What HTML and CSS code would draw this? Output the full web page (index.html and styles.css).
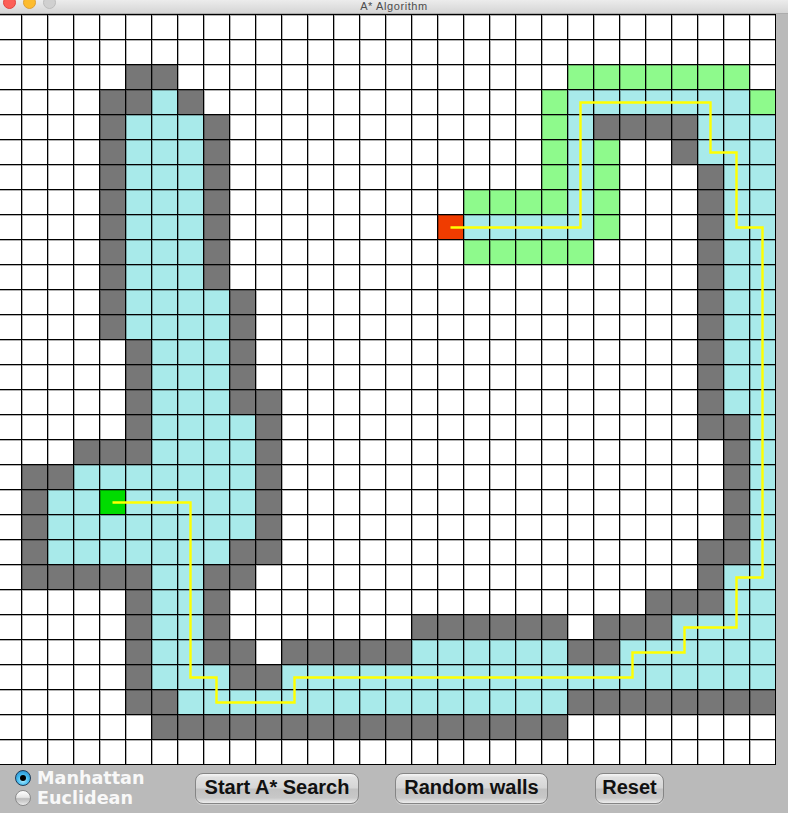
FILE: index.html
```html
<!DOCTYPE html>
<html>
<head>
<meta charset="utf-8">
<title>A* Algorithm</title>
<link rel="stylesheet" href="styles.css">
</head>
<body>
<div class="window">
  <header class="titlebar">
    <div class="lights"><span class="light red"></span><span class="light yellow"></span><span class="light grey"></span></div>
    <div class="title">A* Algorithm</div>
    <div></div>
  </header>
  <main class="board">
    <div class="grid">
<i></i><i></i><i></i><i></i><i></i><i></i><i></i><i></i><i></i><i></i><i></i><i></i><i></i><i></i><i></i><i></i><i></i><i></i><i></i><i></i><i></i><i></i><i></i><i></i><i></i><i></i><i></i><i></i><i></i><i></i>
<i></i><i></i><i></i><i></i><i></i><i></i><i></i><i></i><i></i><i></i><i></i><i></i><i></i><i></i><i></i><i></i><i></i><i></i><i></i><i></i><i></i><i></i><i></i><i></i><i></i><i></i><i></i><i></i><i></i><i></i>
<i></i><i></i><i></i><i></i><i></i><i class="w"></i><i class="w"></i><i></i><i></i><i></i><i></i><i></i><i></i><i></i><i></i><i></i><i></i><i></i><i></i><i></i><i></i><i></i><i class="o"></i><i class="o"></i><i class="o"></i><i class="o"></i><i class="o"></i><i class="o"></i><i class="o"></i><i></i>
<i></i><i></i><i></i><i></i><i class="w"></i><i class="w"></i><i class="v"></i><i class="w"></i><i></i><i></i><i></i><i></i><i></i><i></i><i></i><i></i><i></i><i></i><i></i><i></i><i></i><i class="o"></i><i class="v"></i><i class="v"></i><i class="v"></i><i class="v"></i><i class="v"></i><i class="v"></i><i class="v"></i><i class="o"></i>
<i></i><i></i><i></i><i></i><i class="w"></i><i class="v"></i><i class="v"></i><i class="v"></i><i class="w"></i><i></i><i></i><i></i><i></i><i></i><i></i><i></i><i></i><i></i><i></i><i></i><i></i><i class="o"></i><i class="v"></i><i class="w"></i><i class="w"></i><i class="w"></i><i class="w"></i><i class="v"></i><i class="v"></i><i class="v"></i>
<i></i><i></i><i></i><i></i><i class="w"></i><i class="v"></i><i class="v"></i><i class="v"></i><i class="w"></i><i></i><i></i><i></i><i></i><i></i><i></i><i></i><i></i><i></i><i></i><i></i><i></i><i class="o"></i><i class="v"></i><i class="o"></i><i></i><i></i><i class="w"></i><i class="v"></i><i class="v"></i><i class="v"></i>
<i></i><i></i><i></i><i></i><i class="w"></i><i class="v"></i><i class="v"></i><i class="v"></i><i class="w"></i><i></i><i></i><i></i><i></i><i></i><i></i><i></i><i></i><i></i><i></i><i></i><i></i><i class="o"></i><i class="v"></i><i class="o"></i><i></i><i></i><i></i><i class="w"></i><i class="v"></i><i class="v"></i>
<i></i><i></i><i></i><i></i><i class="w"></i><i class="v"></i><i class="v"></i><i class="v"></i><i class="w"></i><i></i><i></i><i></i><i></i><i></i><i></i><i></i><i></i><i></i><i class="o"></i><i class="o"></i><i class="o"></i><i class="o"></i><i class="v"></i><i class="o"></i><i></i><i></i><i></i><i class="w"></i><i class="v"></i><i class="v"></i>
<i></i><i></i><i></i><i></i><i class="w"></i><i class="v"></i><i class="v"></i><i class="v"></i><i class="w"></i><i></i><i></i><i></i><i></i><i></i><i></i><i></i><i></i><i class="s"></i><i class="v"></i><i class="v"></i><i class="v"></i><i class="v"></i><i class="v"></i><i class="o"></i><i></i><i></i><i></i><i class="w"></i><i class="v"></i><i class="v"></i>
<i></i><i></i><i></i><i></i><i class="w"></i><i class="v"></i><i class="v"></i><i class="v"></i><i class="w"></i><i></i><i></i><i></i><i></i><i></i><i></i><i></i><i></i><i></i><i class="o"></i><i class="o"></i><i class="o"></i><i class="o"></i><i class="o"></i><i></i><i></i><i></i><i></i><i class="w"></i><i class="v"></i><i class="v"></i>
<i></i><i></i><i></i><i></i><i class="w"></i><i class="v"></i><i class="v"></i><i class="v"></i><i class="w"></i><i></i><i></i><i></i><i></i><i></i><i></i><i></i><i></i><i></i><i></i><i></i><i></i><i></i><i></i><i></i><i></i><i></i><i></i><i class="w"></i><i class="v"></i><i class="v"></i>
<i></i><i></i><i></i><i></i><i class="w"></i><i class="v"></i><i class="v"></i><i class="v"></i><i class="v"></i><i class="w"></i><i></i><i></i><i></i><i></i><i></i><i></i><i></i><i></i><i></i><i></i><i></i><i></i><i></i><i></i><i></i><i></i><i></i><i class="w"></i><i class="v"></i><i class="v"></i>
<i></i><i></i><i></i><i></i><i class="w"></i><i class="v"></i><i class="v"></i><i class="v"></i><i class="v"></i><i class="w"></i><i></i><i></i><i></i><i></i><i></i><i></i><i></i><i></i><i></i><i></i><i></i><i></i><i></i><i></i><i></i><i></i><i></i><i class="w"></i><i class="v"></i><i class="v"></i>
<i></i><i></i><i></i><i></i><i></i><i class="w"></i><i class="v"></i><i class="v"></i><i class="v"></i><i class="w"></i><i></i><i></i><i></i><i></i><i></i><i></i><i></i><i></i><i></i><i></i><i></i><i></i><i></i><i></i><i></i><i></i><i></i><i class="w"></i><i class="v"></i><i class="v"></i>
<i></i><i></i><i></i><i></i><i></i><i class="w"></i><i class="v"></i><i class="v"></i><i class="v"></i><i class="w"></i><i></i><i></i><i></i><i></i><i></i><i></i><i></i><i></i><i></i><i></i><i></i><i></i><i></i><i></i><i></i><i></i><i></i><i class="w"></i><i class="v"></i><i class="v"></i>
<i></i><i></i><i></i><i></i><i></i><i class="w"></i><i class="v"></i><i class="v"></i><i class="v"></i><i class="w"></i><i class="w"></i><i></i><i></i><i></i><i></i><i></i><i></i><i></i><i></i><i></i><i></i><i></i><i></i><i></i><i></i><i></i><i></i><i class="w"></i><i class="v"></i><i class="v"></i>
<i></i><i></i><i></i><i></i><i></i><i class="w"></i><i class="v"></i><i class="v"></i><i class="v"></i><i class="v"></i><i class="w"></i><i></i><i></i><i></i><i></i><i></i><i></i><i></i><i></i><i></i><i></i><i></i><i></i><i></i><i></i><i></i><i></i><i class="w"></i><i class="w"></i><i class="v"></i>
<i></i><i></i><i></i><i class="w"></i><i class="w"></i><i class="w"></i><i class="v"></i><i class="v"></i><i class="v"></i><i class="v"></i><i class="w"></i><i></i><i></i><i></i><i></i><i></i><i></i><i></i><i></i><i></i><i></i><i></i><i></i><i></i><i></i><i></i><i></i><i></i><i class="w"></i><i class="v"></i>
<i></i><i class="w"></i><i class="w"></i><i class="v"></i><i class="v"></i><i class="v"></i><i class="v"></i><i class="v"></i><i class="v"></i><i class="v"></i><i class="w"></i><i></i><i></i><i></i><i></i><i></i><i></i><i></i><i></i><i></i><i></i><i></i><i></i><i></i><i></i><i></i><i></i><i></i><i class="w"></i><i class="v"></i>
<i></i><i class="w"></i><i class="v"></i><i class="v"></i><i class="e"></i><i class="v"></i><i class="v"></i><i class="v"></i><i class="v"></i><i class="v"></i><i class="w"></i><i></i><i></i><i></i><i></i><i></i><i></i><i></i><i></i><i></i><i></i><i></i><i></i><i></i><i></i><i></i><i></i><i></i><i class="w"></i><i class="v"></i>
<i></i><i class="w"></i><i class="v"></i><i class="v"></i><i class="v"></i><i class="v"></i><i class="v"></i><i class="v"></i><i class="v"></i><i class="v"></i><i class="w"></i><i></i><i></i><i></i><i></i><i></i><i></i><i></i><i></i><i></i><i></i><i></i><i></i><i></i><i></i><i></i><i></i><i></i><i class="w"></i><i class="v"></i>
<i></i><i class="w"></i><i class="v"></i><i class="v"></i><i class="v"></i><i class="v"></i><i class="v"></i><i class="v"></i><i class="v"></i><i class="w"></i><i class="w"></i><i></i><i></i><i></i><i></i><i></i><i></i><i></i><i></i><i></i><i></i><i></i><i></i><i></i><i></i><i></i><i></i><i class="w"></i><i class="w"></i><i class="v"></i>
<i></i><i class="w"></i><i class="w"></i><i class="w"></i><i class="w"></i><i class="w"></i><i class="v"></i><i class="v"></i><i class="w"></i><i class="w"></i><i></i><i></i><i></i><i></i><i></i><i></i><i></i><i></i><i></i><i></i><i></i><i></i><i></i><i></i><i></i><i></i><i></i><i class="w"></i><i class="v"></i><i class="v"></i>
<i></i><i></i><i></i><i></i><i></i><i class="w"></i><i class="v"></i><i class="v"></i><i class="w"></i><i></i><i></i><i></i><i></i><i></i><i></i><i></i><i></i><i></i><i></i><i></i><i></i><i></i><i></i><i></i><i></i><i class="w"></i><i class="w"></i><i class="w"></i><i class="v"></i><i class="v"></i>
<i></i><i></i><i></i><i></i><i></i><i class="w"></i><i class="v"></i><i class="v"></i><i class="w"></i><i></i><i></i><i></i><i></i><i></i><i></i><i></i><i class="w"></i><i class="w"></i><i class="w"></i><i class="w"></i><i class="w"></i><i class="w"></i><i></i><i class="w"></i><i class="w"></i><i class="w"></i><i class="v"></i><i class="v"></i><i class="v"></i><i class="v"></i>
<i></i><i></i><i></i><i></i><i></i><i class="w"></i><i class="v"></i><i class="v"></i><i class="w"></i><i class="w"></i><i></i><i class="w"></i><i class="w"></i><i class="w"></i><i class="w"></i><i class="w"></i><i class="v"></i><i class="v"></i><i class="v"></i><i class="v"></i><i class="v"></i><i class="v"></i><i class="w"></i><i class="w"></i><i class="v"></i><i class="v"></i><i class="v"></i><i class="v"></i><i class="v"></i><i class="v"></i>
<i></i><i></i><i></i><i></i><i></i><i class="w"></i><i class="v"></i><i class="v"></i><i class="v"></i><i class="w"></i><i class="w"></i><i class="v"></i><i class="v"></i><i class="v"></i><i class="v"></i><i class="v"></i><i class="v"></i><i class="v"></i><i class="v"></i><i class="v"></i><i class="v"></i><i class="v"></i><i class="v"></i><i class="v"></i><i class="v"></i><i class="v"></i><i class="v"></i><i class="v"></i><i class="v"></i><i class="v"></i>
<i></i><i></i><i></i><i></i><i></i><i class="w"></i><i class="w"></i><i class="v"></i><i class="v"></i><i class="v"></i><i class="v"></i><i class="v"></i><i class="v"></i><i class="v"></i><i class="v"></i><i class="v"></i><i class="v"></i><i class="v"></i><i class="v"></i><i class="v"></i><i class="v"></i><i class="v"></i><i class="w"></i><i class="w"></i><i class="w"></i><i class="w"></i><i class="w"></i><i class="w"></i><i class="w"></i><i class="w"></i>
<i></i><i></i><i></i><i></i><i></i><i></i><i class="w"></i><i class="w"></i><i class="w"></i><i class="w"></i><i class="w"></i><i class="w"></i><i class="w"></i><i class="w"></i><i class="w"></i><i class="w"></i><i class="w"></i><i class="w"></i><i class="w"></i><i class="w"></i><i class="w"></i><i class="w"></i><i></i><i></i><i></i><i></i><i></i><i></i><i></i><i></i>
<i></i><i></i><i></i><i></i><i></i><i></i><i></i><i></i><i></i><i></i><i></i><i></i><i></i><i></i><i></i><i></i><i></i><i></i><i></i><i></i><i></i><i></i><i></i><i></i><i></i><i></i><i></i><i></i><i></i><i></i>
    </div>
    <svg class="path" width="781" height="751" viewBox="0 0 781 751">
      <path d="M117.5 488.5 H195.5 V663.5 H221.5 V688.5 H299.5 V663.5 H637.5 V638.5 H689.5 V613.5 H741.5 V563.5 H767.5 V213.5 H741.5 V138.5 H715.5 V88.5 H585.5 V213.5 H455.5" fill="none" stroke="#ffff00" stroke-width="2.4" stroke-linecap="butt" stroke-linejoin="miter"/>
    </svg>
  </main>
  <footer class="controls">
    <div class="radios">
      <label class="radio"><span class="dot on"></span>Manhattan</label>
      <label class="radio"><span class="dot"></span>Euclidean</label>
    </div>
    <button class="btn start">Start A* Search</button>
    <button class="btn random">Random walls</button>
    <button class="btn reset">Reset</button>
  </footer>
</div>
</body>
</html>
```

FILE: styles.css
```css
* { box-sizing: border-box; }
html, body { margin: 0; padding: 0; }
body {
  width: 788px;
  height: 813px;
  overflow: hidden;
  background: #bababa;
  font-family: "Liberation Sans", Arial, sans-serif;
}
.window { width: 788px; height: 813px; overflow: hidden; }

.titlebar {
  height: 14px;
  border-bottom: 1px solid #adadad;
  background: linear-gradient(to bottom, #ececec, #d5d5d5);
  display: grid;
  grid-template-columns: 1fr auto 1fr;
  overflow: hidden;
}
.lights {
  display: flex;
  gap: 7px;
  padding-left: 3px;
  margin-top: -4px;
  align-items: flex-start;
}
.light {
  width: 13px;
  height: 13px;
  border-radius: 50%;
  flex: none;
}
.red { background: #fc5f57; border: 1px solid #e0443e; }
.yellow { background: #fdbc2e; border: 1px solid #de9f34; }
.grey { background: #d0d0d0; border: 1px solid #bcbcbc; }
.title {
  font-size: 11px;
  line-height: 13px;
  color: #4d4d4d;
  padding-top: 0;
  white-space: nowrap;
  letter-spacing: 0.6px;
}

.board {
  position: relative;
  margin-left: -5px;
  width: 781px;
  height: 751px;
}
.grid {
  display: grid;
  grid-template-columns: repeat(30, 25px);
  grid-template-rows: repeat(30, 24px);
  gap: 1px;
  padding: 1px;
  background: #000;
  width: 781px;
  height: 751px;
}
.grid i {
  display: block;
  background: #ffffff;
  box-shadow: inset 1px 1px 0 rgba(0, 0, 0, 0.3);
}
.grid i.w { background: #777777; }
.grid i.v { background: #a8eaea; }
.grid i.o { background: #8efa8c; }
.grid i.s { background: #f03c00; }
.grid i.e { background: #00dc00; }

.path {
  position: absolute;
  left: 0;
  top: 0;
  pointer-events: none;
}

.controls {
  height: 48px;
  display: flex;
  align-items: flex-start;
  padding-left: 15px;
  background: #bababa;
}
.radios {
  width: 180px;
  padding-top: 3px;
  display: flex;
  flex-direction: column;
}
.radio {
  display: flex;
  align-items: center;
  gap: 6px;
  height: 20px;
  font-family: "DejaVu Sans", sans-serif;
  font-weight: bold;
  font-size: 17.6px;
  line-height: 20px;
  color: #f8f8f8;
  white-space: nowrap;
}
.dot {
  width: 16px;
  height: 16px;
  border-radius: 50%;
  flex: none;
  border: 1px solid #8c8c8c;
  background: linear-gradient(to bottom, #ffffff 0%, #e6e6e6 45%, #bdbdbd 55%, #d8d8d8 85%, #f2f2f2 100%);
  display: flex;
  align-items: center;
  justify-content: center;
}
.dot.on {
  border-color: #1c3a58;
  background: radial-gradient(circle at 50% 65%, #b8f0ff 0%, #49bdf0 45%, #1b7fc2 100%);
}
.dot.on::after {
  content: "";
  width: 6px;
  height: 6px;
  border-radius: 50%;
  background: #000;
}

.btn {
  margin-top: 8px;
  height: 31px;
  border: 1px solid #858585;
  border-radius: 8px;
  padding: 0 0 3px;
  font-family: "Liberation Sans", Arial, sans-serif;
  font-weight: bold;
  font-size: 20px;
  line-height: 26px;
  color: #111;
  white-space: nowrap;
  background: linear-gradient(to bottom, #f7f7f7 0%, #e0e0e0 12%, #d6d6d6 48%, #c2c2c2 52%, #c8c8c8 82%, #ececec 100%);
  box-shadow: 0 1px 0 rgba(255,255,255,0.35);
}
.start { width: 164px; }
.random { width: 153px; margin-left: 36px; }
.reset { width: 69px; margin-left: 47px; }
```
